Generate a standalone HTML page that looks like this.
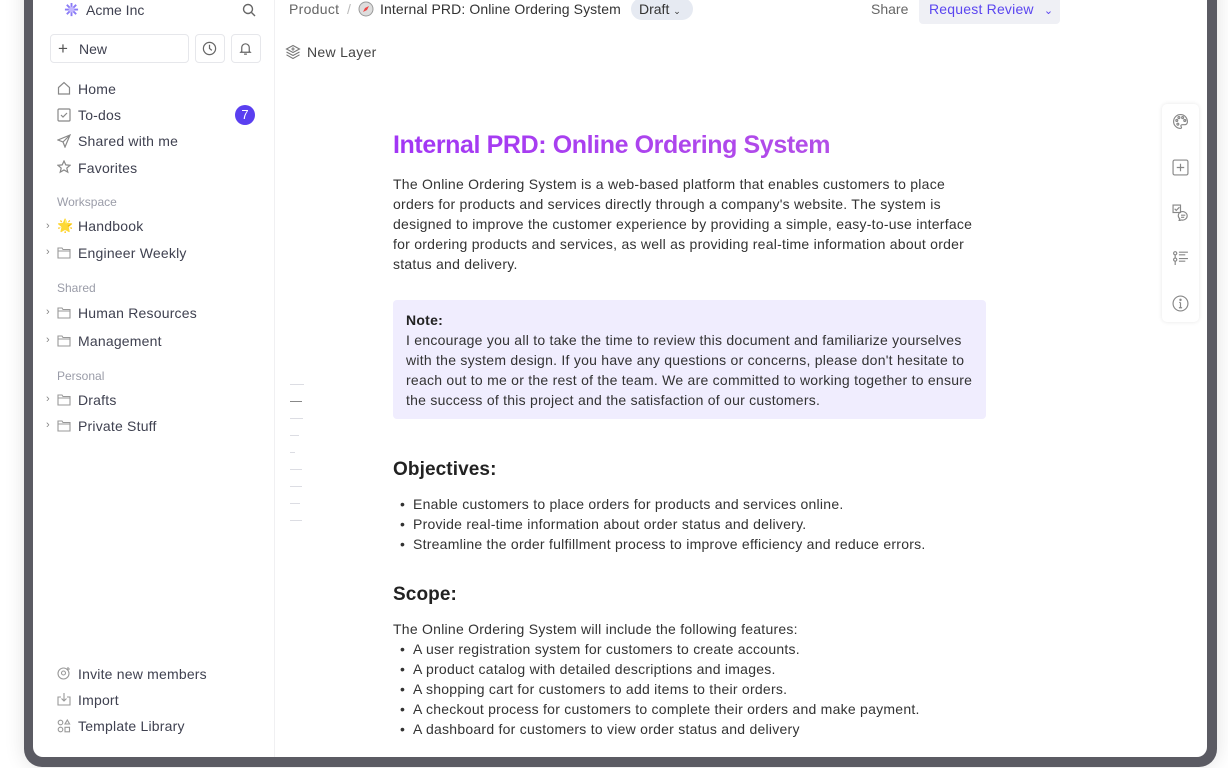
<!DOCTYPE html>
<html><head><meta charset="utf-8"><style>
*{margin:0;padding:0;box-sizing:border-box}
body{width:1228px;height:768px;background:#fff;font-family:"Liberation Sans",sans-serif;position:relative;overflow:hidden;color:#333}
.frame{position:absolute;left:24px;top:-20px;width:1193px;height:787px;background:#5b5b63;border-radius:0 0 18px 18px;box-shadow:0 0 20px rgba(0,0,0,.12)}
.inner{position:absolute;left:33px;top:-20px;width:1174px;height:777px;background:#fff;border-radius:0 0 10px 10px;overflow:hidden}
.side{position:absolute;left:33px;top:0;width:242px;height:757px;border-right:1px solid #f0f0f2}
.a{position:absolute;white-space:nowrap}
.nav{position:absolute;left:78px;font-size:14px;color:#3f4150;letter-spacing:.2px}
.ic{position:absolute;left:57px}
.sec{position:absolute;left:57px;font-size:12px;color:#9a9ca8}
.chev{position:absolute;left:46px;font-size:11px;color:#888}
.btn{position:absolute;border:1px solid #e6e7eb;border-radius:4px;background:#fff}
p.t{position:absolute;left:393px;font-size:14px;line-height:20px;color:#333;white-space:nowrap;letter-spacing:.25px}
ul{position:absolute;left:413px;font-size:14px;line-height:20px;color:#333;list-style:none;white-space:nowrap;letter-spacing:.25px}
ul li:before{content:"•";position:absolute;left:-13px}
h2{position:absolute;left:393px;font-size:19px;font-weight:bold;color:#222}
.dash{position:absolute;left:290px;height:1px;background:#dcdde3}
</style></head><body>
<div class="frame"></div><div class="inner"></div>
<div class="side"></div>
<svg class="a" style="left:64px;top:2px" width="15" height="15" viewBox="0 0 16 16"><g stroke="#8b7cf6" stroke-width="2"><path d="M8 1v14M1 8h14M3 3l10 10M13 3L3 13"/></g><circle cx="8" cy="8" r="3" fill="#c4b8ff"/></svg>
<div class="a" style="left:86px;top:2px;font-size:14px;color:#3f4150">Acme Inc</div>
<svg class="a" style="left:242px;top:3px" width="14" height="14" viewBox="0 0 14 14" fill="none" stroke="#666" stroke-width="1.4"><circle cx="6" cy="6" r="4.5"/><path d="M9.5 9.5l3.5 3.5"/></svg>
<div class="btn" style="left:50px;top:34px;width:139px;height:29px"></div>
<div class="a" style="left:58px;top:39px;font-size:17px;color:#555;font-weight:300">+</div>
<div class="a" style="left:79px;top:41px;font-size:14px;color:#3f4150">New</div>
<div class="btn" style="left:195px;top:34px;width:30px;height:29px"></div>
<svg class="a" style="left:202px;top:41px" width="15" height="15" viewBox="0 0 16 16" fill="none" stroke="#666" stroke-width="1.3"><circle cx="8" cy="8" r="6.5"/><path d="M8 4v4l2.5 2"/></svg>
<div class="btn" style="left:231px;top:34px;width:30px;height:29px"></div>
<svg class="a" style="left:238px;top:41px" width="15" height="15" viewBox="0 0 16 16" fill="none" stroke="#666" stroke-width="1.3"><path d="M4 11V7a4 4 0 018 0v4l1 1H3zM6.5 14h3"/></svg>
<svg class="ic" style="top:81px" width="14" height="14" viewBox="0 0 14 14" fill="none" stroke="#888" stroke-width="1.2"><path d="M1.5 6.5L7 1.5l5.5 5V13h-11z"/></svg>
<div class="nav" style="top:81px">Home</div>
<svg class="ic" style="top:108px" width="14" height="14" viewBox="0 0 14 14" fill="none" stroke="#888" stroke-width="1.2"><rect x="1" y="1" width="12" height="12" rx="1"/><path d="M4 7l2 2 4-4"/></svg>
<div class="nav" style="top:107px">To-dos</div>
<div class="a" style="left:235px;top:105px;width:20px;height:20px;border-radius:50%;background:#5a3ff0;color:#fff;font-size:13px;text-align:center;line-height:20px">7</div>
<svg class="ic" style="top:134px" width="14" height="14" viewBox="0 0 14 14" fill="none" stroke="#888" stroke-width="1.2"><path d="M13 1L1 6l5 2 2 5z M6 8l7-7"/></svg>
<div class="nav" style="top:133px">Shared with me</div>
<svg class="ic" style="top:160px" width="14" height="14" viewBox="0 0 14 14" fill="none" stroke="#888" stroke-width="1.2"><path d="M7 1l1.8 3.9 4.2.4-3.2 2.8 1 4.1L7 10l-3.8 2.2 1-4.1L1 5.3l4.2-.4z"/></svg>
<div class="nav" style="top:160px">Favorites</div>
<div class="sec" style="top:195px">Workspace</div>
<div class="chev" style="top:220px">›</div><div class="a" style="left:57px;top:218px;font-size:13px">🌟</div><div class="nav" style="top:218px">Handbook</div>
<div class="chev" style="top:246px">›</div><svg class="ic" style="top:246px" width="14" height="13" viewBox="0 0 14 13" fill="none" stroke="#999" stroke-width="1.1"><path d="M1 2h4l1 1.5h7V12H1z M1 5h12"/></svg><div class="nav" style="top:245px">Engineer Weekly</div>
<div class="sec" style="top:281px">Shared</div>
<div class="chev" style="top:306px">›</div><svg class="ic" style="top:306px" width="14" height="13" viewBox="0 0 14 13" fill="none" stroke="#999" stroke-width="1.1"><path d="M1 2h4l1 1.5h7V12H1z M1 5h12"/></svg><div class="nav" style="top:305px">Human Resources</div>
<div class="chev" style="top:334px">›</div><svg class="ic" style="top:334px" width="14" height="13" viewBox="0 0 14 13" fill="none" stroke="#999" stroke-width="1.1"><path d="M1 2h4l1 1.5h7V12H1z M1 5h12"/></svg><div class="nav" style="top:333px">Management</div>
<div class="sec" style="top:369px">Personal</div>
<div class="chev" style="top:393px">›</div><svg class="ic" style="top:393px" width="14" height="13" viewBox="0 0 14 13" fill="none" stroke="#999" stroke-width="1.1"><path d="M1 2h4l1 1.5h7V12H1z M1 5h12"/></svg><div class="nav" style="top:392px">Drafts</div>
<div class="chev" style="top:419px">›</div><svg class="ic" style="top:419px" width="14" height="13" viewBox="0 0 14 13" fill="none" stroke="#999" stroke-width="1.1"><path d="M1 2h4l1 1.5h7V12H1z M1 5h12"/></svg><div class="nav" style="top:418px">Private Stuff</div>
<svg class="ic" style="top:666px" width="14" height="14" viewBox="0 0 14 14" fill="none" stroke="#999" stroke-width="1.1"><circle cx="6.5" cy="7.5" r="5.5"/><circle cx="6.5" cy="7" r="2"/><path d="M11 1v4M9 3h4"/></svg><div class="nav" style="top:666px">Invite new members</div>
<svg class="ic" style="top:692px" width="14" height="14" viewBox="0 0 14 14" fill="none" stroke="#999" stroke-width="1.1"><path d="M4 5H1v8h12V5h-3M7 1v8M4.5 6.5L7 9l2.5-2.5"/></svg><div class="nav" style="top:692px">Import</div>
<svg class="ic" style="top:719px" width="14" height="14" viewBox="0 0 14 14" fill="none" stroke="#999" stroke-width="1.1"><circle cx="3.5" cy="3.5" r="2.3"/><circle cx="3.5" cy="10.5" r="2.3"/><rect x="8" y="8.3" width="4.5" height="4.5"/><path d="M10.3 1l2.3 4h-4.6z"/></svg><div class="nav" style="top:718px">Template Library</div>
<div class="a" style="left:289px;top:1px;font-size:14px;color:#666;letter-spacing:.3px">Product</div>
<div class="a" style="left:347px;top:1px;font-size:14px;color:#bbb">/</div>
<svg class="a" style="left:358px;top:1px" width="16" height="16" viewBox="0 0 16 16"><circle cx="8" cy="8" r="7" fill="#ddd" stroke="#999"/><path d="M11 5L7 7 5 11 9 9z" fill="#e44"/></svg>
<div class="a" style="left:380px;top:1px;font-size:14px;color:#333;letter-spacing:.1px">Internal PRD: Online Ordering System</div>
<div class="a" style="left:631px;top:-2px;width:62px;height:22px;border-radius:11px;background:#e6eaf2;font-size:14px;color:#333;padding:3px 0 0 8px">Draft <span style="font-size:9px">⌄</span></div>
<div class="a" style="left:871px;top:1px;font-size:14px;color:#666">Share</div>
<div class="a" style="left:919px;top:-4px;width:141px;height:28px;border-radius:4px;background:#eff0f5;font-size:14px;color:#5a45f0;padding:5px 0 0 10px;letter-spacing:.2px">Request Review <span style="margin-left:6px;font-size:11px">⌄</span></div>
<svg class="a" style="left:285px;top:44px" width="16" height="16" viewBox="0 0 16 16" fill="none" stroke="#777" stroke-width="1.1"><path d="M8 1.5l6.5 3.5L8 8.5 1.5 5z M1.5 8L8 11.5 14.5 8 M1.5 10.8L8 14.5l6.5-3.7 M8 3.3v3.4M6.3 5h3.4"/></svg>
<div class="a" style="left:307px;top:44px;font-size:14px;color:#444;letter-spacing:.3px">New Layer</div>
<div class="a" style="left:1162px;top:104px;width:37px;height:218px;border-radius:5px;box-shadow:0 0 4px rgba(0,0,0,.1);background:#fff"></div>
<svg class="a" style="left:1172px;top:113px" width="17" height="17" viewBox="0 0 16 16" fill="none" stroke="#888" stroke-width="1.1"><path d="M8 1.5a6.5 6.5 0 100 13c1 0 1.2-1 .6-1.7-.6-.8 0-1.8 1-1.8H12a2.5 2.5 0 002.5-2.5C14.5 4.3 11.6 1.5 8 1.5z"/><circle cx="4.5" cy="7" r=".9"/><circle cx="6.5" cy="4.3" r=".9"/><circle cx="10" cy="4.3" r=".9"/><circle cx="12" cy="7" r=".9"/><circle cx="5.5" cy="10.5" r=".9"/></svg>
<svg class="a" style="left:1172px;top:159px" width="17" height="17" viewBox="0 0 16 16" fill="none" stroke="#888" stroke-width="1.1"><rect x="1" y="1" width="14" height="14" rx="1.5"/><path d="M8 4.5v7M4.5 8h7"/></svg>
<svg class="a" style="left:1172px;top:204px" width="17" height="17" viewBox="0 0 16 16" fill="none" stroke="#888" stroke-width="1.1"><rect x="1" y="1" width="7" height="7"/><path d="M2.5 4.5l1.5 1.5 3-3"/><path d="M8 7.5a4.5 4 0 11.5 7.5l-2 1 .8-2a4 4 0 01.7-6.5zM8.5 10.5h4M8.5 12.5h3"/></svg>
<svg class="a" style="left:1172px;top:249px" width="17" height="17" viewBox="0 0 16 16" fill="none" stroke="#888" stroke-width="1.1"><circle cx="3" cy="4" r="1.5"/><circle cx="3" cy="10" r="1.5"/><path d="M3 5.5v3M3 11.5V15M6.5 3H15M6.5 5.5h6M6.5 9H15M6.5 11.5h6"/></svg>
<svg class="a" style="left:1172px;top:295px" width="17" height="17" viewBox="0 0 16 16" fill="none" stroke="#888" stroke-width="1.1"><circle cx="8" cy="8" r="7"/><path d="M8 7v5M6.5 12h3M6.8 7H8"/><circle cx="8" cy="4.6" r=".6" fill="#888"/></svg>
<div class="dash" style="top:384px;width:14px"></div>
<div class="dash" style="top:401px;width:12px;background:#888"></div>
<div class="dash" style="top:418px;width:13px"></div>
<div class="dash" style="top:435px;width:9px"></div>
<div class="dash" style="top:452px;width:5px"></div>
<div class="dash" style="top:469px;width:12px"></div>
<div class="dash" style="top:486px;width:12px"></div>
<div class="dash" style="top:503px;width:10px"></div>
<div class="dash" style="top:520px;width:12px"></div>
<div class="a" style="left:393px;top:131px;font-size:25px;font-weight:bold;letter-spacing:-0.4px;background:linear-gradient(90deg,#a236f5,#b34ee8);-webkit-background-clip:text;color:transparent">Internal PRD: Online Ordering System</div>
<p class="t" style="top:174px">The Online Ordering System is a web-based platform that enables customers to place<br>orders for products and services directly through a company's website. The system is<br>designed to improve the customer experience by providing a simple, easy-to-use interface<br>for ordering products and services, as well as providing real-time information about order<br>status and delivery.</p>
<div class="a" style="left:393px;top:300px;width:593px;height:119px;background:#f0edfe;border-radius:4px"></div>
<p class="t" style="left:406px;top:310px"><b style="color:#222">Note:</b><br>I encourage you all to take the time to review this document and familiarize yourselves<br>with the system design. If you have any questions or concerns, please don't hesitate to<br>reach out to me or the rest of the team. We are committed to working together to ensure<br>the success of this project and the satisfaction of our customers.</p>
<h2 style="top:459px;font-size:19px;letter-spacing:.1px">Objectives:</h2>
<ul style="top:494px"><li>Enable customers to place orders for products and services online.</li><li>Provide real-time information about order status and delivery.</li><li>Streamline the order fulfillment process to improve efficiency and reduce errors.</li></ul>
<h2 style="top:584px;letter-spacing:.1px">Scope:</h2>
<p class="t" style="top:619px">The Online Ordering System will include the following features:</p>
<ul style="top:639px"><li>A user registration system for customers to create accounts.</li><li>A product catalog with detailed descriptions and images.</li><li>A shopping cart for customers to add items to their orders.</li><li>A checkout process for customers to complete their orders and make payment.</li><li>A dashboard for customers to view order status and delivery</li></ul>
</body></html>
